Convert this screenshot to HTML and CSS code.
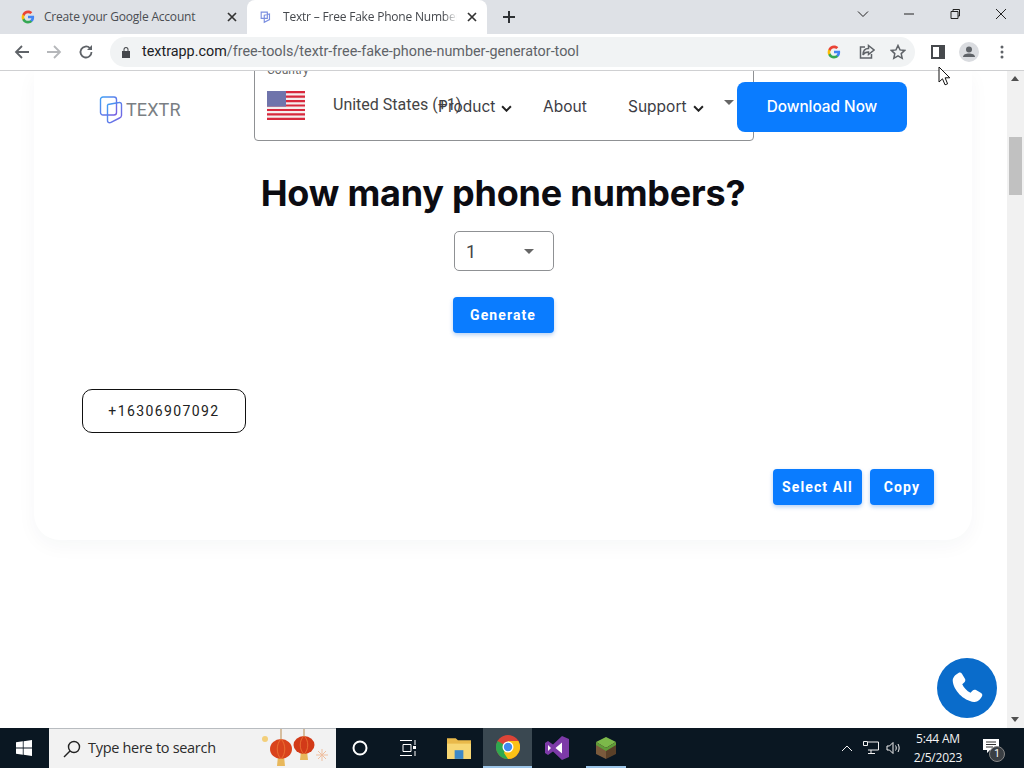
FILE: index.html
```html
<!DOCTYPE html>
<html lang="en">
<head>
<meta charset="utf-8">
<title>Textr – Free Fake Phone Number</title>
<link rel="stylesheet" href="styles.css">
</head>
<body>
<div class="screen">
  <header class="chrome">
    <div class="tabstrip">
      <div class="tab">
        <svg class="favicon" viewBox="0 0 48 48"><path fill="#4285f4" d="M45 24.500c0-1.600-.1-3-.4-4.500H24v8.500h11.800c-.5 2.800-2 5-4.400 6.600v5.500h7.100C42.600 36.800 45 31.200 45 24.500z"/><path fill="#34a853" d="M24 46c5.900 0 10.900-2 14.500-5.400l-7.100-5.500c-2 1.300-4.500 2.100-7.400 2.100-5.700 0-10.500-3.800-12.200-9H4.500v5.700C8.100 41 15.500 46 24 46z"/><path fill="#fbbc05" d="M11.800 28.700c-.9-2.800-.9-5.600 0-8.400v-5.700H4.500c-3 6-3 13.800 0 19.800z"/><path fill="#ea4335" d="M24 10.800c3.200 0 6.100 1.100 8.400 3.300l6.300-6.300C34.900 4.200 29.900 2 24 2 15.500 2 8.100 7 4.500 14.600l7.300 5.700c1.700-5.200 6.500-9.500 12.200-9.500z"/></svg>
        <span class="tab-title">Create your Google Account</span>
        <svg class="tab-x" viewBox="0 0 10 10"><path d="M1 1l8 8M9 1l-8 8"/></svg>
      </div>
      <div class="tab tab-active">
        <svg class="favicon favicon-textr" viewBox="0 0 16 16"><path d="M2.500 2.500h7v7h-7zM6 6l6-1.500v6.500l-6 3z"/></svg>
        <span class="tab-title">Textr – Free Fake Phone Number</span>
        <svg class="tab-x" viewBox="0 0 10 10"><path d="M1 1l8 8M9 1l-8 8"/></svg>
      </div>
      <svg class="new-tab" viewBox="0 0 12 12"><path d="M6 0v12M0 6h12"/></svg>
      <div class="win-controls">
        <svg viewBox="0 0 12 12"><path d="M1 3.500l5 5 5-5"/></svg>
        <svg viewBox="0 0 12 12"><path d="M1 6h10"/></svg>
        <svg viewBox="0 0 12 12"><path d="M2 3.500h7v7H2zM4 3.500V1.500h6.500V8H9"/></svg>
        <svg viewBox="0 0 12 12"><path d="M1 1l10 10M11 1L1 11"/></svg>
      </div>
    </div>
    <div class="toolbar">
      <svg class="tool" viewBox="0 0 16 16"><path d="M15 8H2M8 2L2 8l6 6"/></svg>
      <svg class="tool tool-off" viewBox="0 0 16 16"><path d="M1 8h13M8 2l6 6-6 6"/></svg>
      <svg class="tool" viewBox="0 0 16 16"><path d="M13.500 8a5.500 5.500 0 1 1-1.600-3.900"/><path class="solid" d="M14 1v5H9z"/></svg>
      <div class="omnibox">
        <svg class="lock" viewBox="0 0 12 12"><path d="M2 5h8v7H2zM3.500 5V3.500a2.500 2.500 0 0 1 5 0V5H7.500V3.500a1.500 1.500 0 0 0-3 0V5z"/></svg>
        <span class="url">textrapp.com<span class="url-path">/free-tools/textr-free-fake-phone-number-generator-tool</span></span>
        <svg class="omni-g" viewBox="0 0 48 48"><path fill="#4285f4" d="M45 24.500c0-1.600-.1-3-.4-4.500H24v8.500h11.800c-.5 2.800-2 5-4.400 6.600v5.500h7.100C42.600 36.800 45 31.200 45 24.500z"/><path fill="#34a853" d="M24 46c5.900 0 10.900-2 14.500-5.400l-7.100-5.500c-2 1.300-4.500 2.100-7.400 2.100-5.700 0-10.500-3.800-12.200-9H4.500v5.700C8.100 41 15.500 46 24 46z"/><path fill="#fbbc05" d="M11.800 28.700c-.9-2.800-.9-5.600 0-8.400v-5.700H4.500c-3 6-3 13.800 0 19.800z"/><path fill="#ea4335" d="M24 10.800c3.200 0 6.100 1.100 8.400 3.300l6.300-6.300C34.900 4.200 29.900 2 24 2 15.500 2 8.100 7 4.500 14.600l7.300 5.700c1.700-5.200 6.500-9.500 12.200-9.500z"/></svg>
        <svg class="omni-icon" viewBox="0 0 16 16"><path d="M6 3H1.500v11h11V10M9.500 1.500L15 6l-5.500 4.500V8C7 8 5 9 4 11c0-4 2-6.500 5.500-6.500z"/></svg>
        <svg class="omni-icon" viewBox="0 0 16 16"><path d="M8 1.500l2 4.400 4.700.5-3.500 3.200 1 4.700L8 11.900 3.800 14.300l1-4.700L1.300 6.400 6 5.900z"/></svg>
      </div>
      <svg class="side-panel" viewBox="0 0 14 14"><path d="M0 0h14v14H0zM2 2v10h6V2z" fill-rule="evenodd"/></svg>
      <svg class="avatar" viewBox="0 0 20 20"><circle class="avatar-bg" cx="10" cy="10" r="10"/><circle cx="10" cy="7.500" r="3"/><path d="M4 15c0-2.500 3-3.500 6-3.500s6 1 6 3.500z"/></svg>
      <svg class="kebab" viewBox="0 0 4 14"><circle cx="2" cy="2" r="1.500"/><circle cx="2" cy="7" r="1.500"/><circle cx="2" cy="12" r="1.500"/></svg>
    </div>
  </header>

  <div class="viewport">
    <main class="page">
      <section class="card">
        <div class="country-box">
          <div class="country-label">Country</div>
          <div class="country-row">
            <svg class="flag" viewBox="0 0 38 29">
              <rect width="38" height="29" rx="1.500" fill="#f4eeee"/>
              <path d="M0 0h38v2.200H0zM0 4.500h38v2.200H0zM0 9h38v2.200H0zM0 13.400h38v2.200H0zM0 17.900h38v2.200H0zM0 22.300h38v2.200H0zM0 26.800h38V29H0z" fill="#d8283c"/>
              <rect width="19" height="15.600" fill="#6f74ab"/>
            </svg>
            <span class="country-name">United States (+1)</span>
            <span class="caret caret-country"></span>
          </div>
        </div>
        <h1 class="title">How many phone numbers?</h1>
        <div class="count-select"><span>1</span><span class="caret"></span></div>
        <button class="btn btn-generate">Generate</button>
        <div class="number-pill">+16306907092</div>
        <div class="actions">
          <button class="btn btn-action">Select All</button>
          <button class="btn btn-action">Copy</button>
        </div>
      </section>

      <nav class="site-nav">
        <div class="logo">
          <svg viewBox="0 0 24 28"><defs><linearGradient id="lg" x1="0" y1="0" x2="1" y2="1"><stop offset="0" stop-color="#3fa0f5"/><stop offset="1" stop-color="#7a5ce0"/></linearGradient></defs><rect x="1.500" y="1" width="16" height="18" rx="2.500" stroke="url(#lg)"/><path d="M9 8.500l11-2a2 2 0 0 1 2.500 2v11a3 3 0 0 1-2 2.500l-9 4.500a2 2 0 0 1-3-2V10.500a2 2 0 0 1 .5-2z" stroke="url(#lg)"/></svg>
          <span>TEXTR</span>
        </div>
        <div class="nav-links">
          <span class="nav-item nav-product">Product<svg viewBox="0 0 10 6"><path d="M1 1l4 4 4-4"/></svg></span>
          <span class="nav-item nav-about">About</span>
          <span class="nav-item nav-support">Support<svg viewBox="0 0 10 6"><path d="M1 1l4 4 4-4"/></svg></span>
        </div>
        <button class="download">Download Now</button>
      </nav>

      <div class="call-fab">
        <svg viewBox="0 0 24 24"><path d="M6.600 2.500c.8-.5 1.700-.3 2.200.5l1.900 3.200c.4.700.3 1.600-.3 2.100L9 9.600c.9 2 2.900 4.300 5.200 5.400l1.400-1.400c.5-.6 1.400-.7 2.100-.3l3.200 1.900c.8.500 1 1.500.5 2.200-1 1.900-2.800 3.600-4.900 3.400C9.500 19.900 3.500 13.200 3 7.500c-.2-2 1.700-4 3.600-5z"/></svg>
      </div>
    </main>
    <aside class="scrollbar">
      <span class="arrow-up"></span>
      <span class="thumb"></span>
      <span class="arrow-down"></span>
    </aside>
  </div>

  <footer class="taskbar">
    <div class="start">
      <svg viewBox="0 0 16 16"><path d="M0 2.300L6.800 1.300v6.300H0zM7.600 1.200L16 0v7.600H7.600zM0 8.400h6.800v6.300L0 13.700zM7.600 8.400H16V16l-8.400-1.200z"/></svg>
    </div>
    <div class="search">
      <svg class="glass" viewBox="0 0 18 18"><circle cx="11" cy="7" r="5.500"/><path d="M7 11l-6 6"/></svg>
      <span class="search-text">Type here to search</span>
      <svg class="lanterns" viewBox="0 0 76 40">
        <path class="string" d="M21 0v12M44 0v8"/>
        <path class="tassel" d="M18 27h6l1 10h-8zM41 22h6l1 9h-8z"/>
        <ellipse cx="21" cy="20" rx="11" ry="10" fill="#d9431c"/>
        <ellipse cx="44" cy="16" rx="10.500" ry="9" fill="#d23a18"/>
        <path class="rib" d="M21 10c-5 5-5 15 0 20M21 10c5 5 5 15 0 20M44 7c-5 4-5 14 0 18M44 7c5 4 5 14 0 18"/>
        <circle cx="5" cy="10" r="3" fill="#f3cf7a"/>
        <path class="spark" d="M62 20v12M56 26h12M58 22l8 8M66 22l-8 8"/>
      </svg>
    </div>
    <div class="task-apps">
      <div class="task-app"><svg class="cortana" viewBox="0 0 16 16"><circle cx="8" cy="8" r="6.500"/></svg></div>
      <div class="task-app"><svg class="taskview" viewBox="0 0 16 16"><path d="M0 .5h12M3 4.500h8v7H3zM0 15.500h12M15 0v5M15 11v5"/><path d="M13 6h3v3h-3z" class="fill-white"/></svg></div>
      <div class="task-app"><svg viewBox="0 0 22 20"><path d="M0 1h8l2 2h12v17H0z" fill="#e9b94a"/><path d="M0 6h22v14H0z" fill="#f7d774"/><path d="M7 12h8v8H7z" fill="#3d88c8"/></svg></div>
      <div class="task-app task-active"><svg viewBox="0 0 24 24"><circle cx="12" cy="12" r="12" fill="#dc4437"/><path d="M12 12L1.600 6A12 12 0 0 0 12 24z" fill="#2fa84f"/><path d="M12 6h10.400A12 12 0 0 1 12 24l-4-6z" fill="#fbc116"/><circle cx="12" cy="12" r="5.500" fill="#fff"/><circle cx="12" cy="12" r="4.200" fill="#3f8bf0"/></svg></div>
      <div class="task-app"><svg viewBox="0 0 24 24"><path d="M17 0l7 3v18l-7 3-9-8.500L3 19l-3-2V7l3-2 5 3.500z" fill="#7d3aa8"/><path d="M17 6.500v11L10.500 12zM3 9v6l3-3z" fill="#fff"/></svg></div>
      <div class="task-app task-open"><svg viewBox="0 0 24 24"><path d="M12 1l10 5-10 6L2 6z" fill="#7cb84a"/><path d="M2 6l10 6v11L2 18z" fill="#7a5a3c"/><path d="M22 6l-10 6v11l10-5z" fill="#5a4028"/><path d="M2 6l10 6 10-6v3l-10 6L2 9z" fill="#5f9c38"/></svg></div>
    </div>
    <div class="tray">
      <svg class="tray-up" viewBox="0 0 12 7"><path d="M1 6l5-5 5 5"/></svg>
      <svg class="tray-net" viewBox="0 0 16 14"><path d="M5 1h10.500v8H5M.5 .5h4v4h-4zM8 9v3M5 12.500h7"/></svg>
      <svg class="tray-vol" viewBox="0 0 16 14"><path d="M1 5h2.500L7 1.500v11L3.500 9H1zM9.500 4.500c1 1.500 1 3.500 0 5M12 3c1.500 2.500 1.500 5.500 0 8"/></svg>
      <div class="clock"><span>5:44 AM</span><span>2/5/2023</span></div>
      <div class="notify">
        <svg viewBox="0 0 16 15"><path d="M0 0h16v11H7l-3 3v-3H0z"/><path class="notify-lines" d="M3 3h10M3 5.500h10M3 8h7"/></svg>
        <span class="badge">1</span>
      </div>
    </div>
  </footer>

  <svg class="cursor" viewBox="0 0 13 20"><path d="M1 1v15l3.500-3.200 2.500 6 2.600-1-2.500-6h4.700z"/></svg>
</div>
</body>
</html>
```
FILE: styles.css
```css
* { box-sizing: border-box; }
html, body { margin: 0; height: 100%; overflow: hidden; }
body { font-family: "Roboto", "Liberation Sans", sans-serif; background: #fff; }
button { font: inherit; border: 0; }
svg { display: block; }

.screen { position: relative; width: 1024px; height: 768px; display: flex; flex-direction: column; overflow: hidden; }

/* Browser chrome */
.chrome { flex: none; height: 71px; display: flex; flex-direction: column; }
.tabstrip { height: 34px; background: #dee1e6; display: flex; align-items: center; padding-left: 8px; }
.tab { width: 239px; height: 34px; display: flex; align-items: center; padding: 0 10px 0 13px; color: #4a4d52; }
.tab-active { width: 240px; background: #fff; border-radius: 8px 8px 0 0; color: #45484d; padding-left: 12px; padding-right: 10px; align-self: flex-end; }
.favicon { width: 14px; height: 14px; flex: none; margin-right: 9px; }
.favicon-textr { margin-right: 10px; }
.favicon-textr path { fill: none; stroke: #7b8fe0; stroke-width: 1.300; }
.tab-title { flex: 1; font: 12px/16px "Open Sans", "Liberation Sans", sans-serif; letter-spacing: -.2px; white-space: nowrap; overflow: hidden; }
.tab-active .tab-title { -webkit-mask-image: linear-gradient(90deg, #000 92%, transparent); mask-image: linear-gradient(90deg, #000 92%, transparent); }
.tab-x { width: 10px; height: 10px; flex: none; margin-left: 10px; }
.tab-x path { stroke: #333; stroke-width: 1.700; fill: none; }
.new-tab { width: 12px; height: 12px; margin-left: 16px; flex: none; }
.new-tab path { stroke: #2e3134; stroke-width: 2; fill: none; }
.win-controls { margin-left: auto; display: flex; gap: 34px; padding-right: 17px; }
.win-controls svg { width: 12px; height: 12px; margin-top: -6px; }
.win-controls path { fill: none; stroke: #222; stroke-width: 1; }

.toolbar { height: 37px; background: #fff; border-bottom: 1px solid #cfd0d2; display: flex; align-items: center; padding: 0 0 1px 14px; }
.tool { width: 16px; height: 16px; flex: none; margin-right: 16px; }
.tool path { fill: none; stroke: #5f6368; stroke-width: 1.800; }
.tool path.solid { fill: #5f6368; stroke: none; }
.tool-off path { stroke: #b5b7ba; }
.omnibox { width: 805px; height: 30px; background: #f1f3f4; border-radius: 15px; display: flex; align-items: center; padding: 0 9px 0 10px; }
.lock { width: 12px; height: 12px; fill: #45484c; flex: none; margin-right: 10px; }
.url { font-size: 14.360px; color: #202124; white-space: nowrap; flex: 1; }
.url-path { color: #5f6368; }
.omni-g { width: 14px; height: 14px; flex: none; margin-right: 18px; }
.omni-icon { width: 16px; height: 16px; flex: none; margin-right: 15px; }
.omni-icon:last-child { margin-right: 0; }
.omni-icon path { fill: none; stroke: #5f6368; stroke-width: 1.500; }
.side-panel { width: 14px; height: 14px; fill: #46494d; flex: none; margin-left: 16px; }
.avatar { width: 20px; height: 20px; fill: #5f6368; flex: none; margin-left: 14px; }
.avatar-bg { fill: #dadce0; }
.kebab { width: 4px; height: 14px; fill: #5f6368; flex: none; margin-left: 21px; }

/* Viewport */
.viewport { flex: 1; display: flex; min-height: 0; }
.page { position: relative; flex: 1; overflow: hidden; background: #fff; }
.card { width: 938px; height: 469px; margin-left: 34px; padding: 0 38px; border-radius: 0 0 26px 26px; background: #fff; box-shadow: 0 6px 20px rgba(30, 40, 70, .04); display: flex; flex-direction: column; }
.country-box { width: 500px; height: 82px; margin: -12px 0 0 182px; flex: none; border: 1px solid #8f9194; border-radius: 4px; padding: 0 12px; color: #4a4a4a; }
.country-label { font-size: 12px; line-height: 14px; margin-top: 3px; color: #666; }
.country-row { display: flex; align-items: center; margin-top: 7px; height: 42px; }
.flag { width: 38px; height: 29px; flex: none; }
.country-name { font-size: 16px; margin-left: 28px; margin-top: -2px; color: #444; }
.caret { width: 0; height: 0; border: 5px solid transparent; border-top: 5px solid #666; border-bottom: 0; }
.caret-country { margin-left: auto; margin-right: 7px; margin-top: -6px; }
.title { margin: 29px 0 0; text-align: center; font: 700 36px/46px "Inter", "Noto Sans", sans-serif; letter-spacing: -.22px; color: #0c0c12; }
.count-select { align-self: center; width: 100px; height: 40px; margin: 15px 0 0 2px; border: 1px solid #8f9194; border-radius: 5px; display: flex; align-items: center; justify-content: space-between; padding: 0 19px 0 11px; font-size: 18px; color: #444; }
.btn { background: #0a7cff; color: #fff; font-weight: 700; font-size: 14px; letter-spacing: 1.100px; border-radius: 4px; box-shadow: 0 2px 4px rgba(10, 100, 220, .3); height: 36px; padding: 0; }
.btn-generate { align-self: center; width: 101px; margin-top: 26px; }
.number-pill { align-self: flex-start; width: 164px; height: 44px; margin: 56px 0 0 10px; border: 1px solid #111; border-radius: 10px; display: flex; align-items: center; justify-content: center; font-size: 14px; letter-spacing: 1.400px; color: #222; }
.actions { display: flex; justify-content: flex-end; gap: 8px; margin-top: 36px; }
.btn-action:first-child { width: 89px; }
.btn-action:last-child { width: 64px; }

/* Site nav overlay */
.site-nav { position: absolute; left: 0; top: 11px; width: 100%; height: 50px; display: flex; align-items: center; padding-left: 99px; }
.logo { display: flex; align-items: center; gap: 3px; width: 83px; margin-top: 6px; color: #7a7f84; font: 400 18px/1 "Roboto", sans-serif; letter-spacing: .1px; flex: none; }
.logo svg { width: 24px; height: 28px; flex: none; }
.logo path, .logo rect { fill: none; stroke-width: 1.400; }
.nav-links { display: flex; width: 299px; margin-left: 256px; flex: none; font: 400 15.500px/1 "Inter", sans-serif; color: #3c3c44; }
.nav-item { display: flex; align-items: center; gap: 6px; white-space: nowrap; }
.nav-item svg { width: 11px; height: 7px; margin-top: 2px; }
.nav-item path { fill: none; stroke: #222; stroke-width: 1.800; }
.nav-product { width: 105px; }
.nav-about { width: 85px; }
.download { flex: none; width: 170px; height: 50px; background: #0a7cff; color: #fff; border-radius: 8px; font: 500 15.300px/1 "Inter", sans-serif; }
.call-fab { position: absolute; right: 10px; bottom: 10px; width: 60px; height: 60px; border-radius: 50%; background: #0a6ccb; display: flex; align-items: center; justify-content: center; }
.call-fab svg { width: 38px; height: 38px; fill: #fff; }

/* Scrollbar */
.scrollbar { flex: none; width: 17px; background: #f1f1f1; position: relative; }
.thumb { position: absolute; left: 2px; top: 66px; width: 13px; height: 58px; background: #c1c1c1; }
.arrow-up, .arrow-down { position: absolute; left: 4px; width: 0; height: 0; border: 4.500px solid transparent; }
.arrow-up { top: 5px; border-bottom: 5px solid #505050; border-top: 0; }
.arrow-down { bottom: 6px; border-top: 5px solid #505050; border-bottom: 0; }

/* Taskbar */
.taskbar { flex: none; height: 40px; background: #0a1722; display: flex; color: #fff; }
.start { width: 49px; display: flex; align-items: center; justify-content: center; padding-right: 2px; }
.start svg { width: 16px; height: 16px; fill: #fff; }
.search { width: 287px; background: #f2f2f2; border-top: 1px solid #b8bcc0; display: flex; align-items: center; padding-left: 14px; overflow: hidden; }
.glass { width: 18px; height: 18px; flex: none; }
.glass circle, .glass path { fill: none; stroke: #222; stroke-width: 1.400; }
.search-text { font: 14.500px/1 "Open Sans", "Liberation Sans", sans-serif; letter-spacing: -.3px; color: #2c2c2c; margin-left: 7px; white-space: nowrap; }
.lanterns { width: 76px; height: 40px; flex: none; margin-left: auto; }
.string { stroke: #b98a4c; stroke-width: 1; fill: none; }
.tassel { fill: #e8b85c; }
.rib { fill: none; stroke: #f0813a; stroke-width: 1; opacity: .7; }
.spark { fill: none; stroke: #eebfa0; stroke-width: 1; }
.task-apps { display: flex; }
.task-app { position: relative; width: 49px; height: 40px; display: flex; align-items: center; justify-content: center; }
.task-app svg { width: 24px; height: 24px; }
.task-app .cortana, .task-app .taskview { width: 16px; height: 16px; }
.task-app .cortana { margin-right: 1px; }
.task-app .taskview { margin-right: 3px; }
.cortana circle { fill: none; stroke: #fff; stroke-width: 2; }
.taskview path { fill: none; stroke: #fff; stroke-width: 1; }
.taskview .fill-white { fill: #fff; stroke: none; }
.task-active { background: #3a4851; border-bottom: 2px solid #9cc5e8; }
.task-open::after { content: ""; position: absolute; left: 5px; right: 4px; bottom: 0; height: 2px; background: #9cc5e8; }
.tray { flex: 1; display: flex; align-items: center; padding-left: 211px; }
.tray svg path { fill: none; stroke: #f2f2f2; stroke-width: 1; }
.tray-up { width: 12px; height: 7px; flex: none; }
.tray-net { width: 16px; height: 14px; margin-left: 10px; flex: none; }
.tray-vol { width: 16px; height: 14px; margin-left: 7px; flex: none; }
.clock { width: 64px; margin-left: 4px; flex: none; display: flex; flex-direction: column; align-items: center; font: 12px/19px "Open Sans", "Liberation Sans", sans-serif; letter-spacing: -.2px; color: #f4f4f4; }
.notify { position: relative; width: 18px; height: 16px; margin-left: 13px; margin-top: -2px; flex: none; }
.tray .notify svg { width: 16px; height: 15px; }
.tray .notify svg > path:first-child { fill: #fff; stroke: none; }
.tray .notify svg .notify-lines { stroke: #333; }
.badge { position: absolute; right: -4px; bottom: -7px; width: 16px; height: 16px; border-radius: 50%; background: #3a3f44; border: 1px solid #888; font-size: 10px; line-height: 14px; text-align: center; color: #fff; }

.cursor { position: absolute; left: 938px; top: 66px; width: 13px; height: 20px; }
.cursor path { fill: #fff; stroke: #111; stroke-width: 1; }
```
